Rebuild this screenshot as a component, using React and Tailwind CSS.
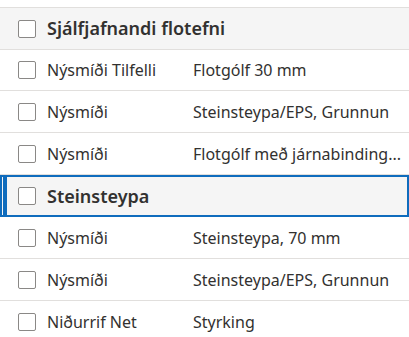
import React from "react";

const font = { fontFamily: '"Noto Sans", "Open Sans", sans-serif' };

function Box() {
  return <div className="w-[18px] h-[18px] rounded-[2px] border-[1.5px] border-[#8a8886] bg-white shrink-0" />;
}

function Row({ a, b, h = "h-[42px]" }) {
  return (
    <div className={`${h} flex items-center border-b border-[#e1dfdd] bg-white`}>
      <div className="w-[47px] pl-[18px] flex items-center shrink-0"><Box /></div>
      <div className="w-[146px] shrink-0 text-[16px] text-[#323130] whitespace-nowrap">{a}</div>
      <div className="shrink-0 text-[16px] text-[#323130] whitespace-nowrap">{b}</div>
    </div>
  );
}

export default function App() {
  return (
    <div className="w-[409px] h-[337px] overflow-hidden bg-white" style={font}>
      <div className="h-[8px] border-b border-[#e1dfdd]" />
      <div className="h-[42px] flex items-center border-b border-[#e1dfdd] bg-[#f5f5f5]">
        <div className="w-[47px] pl-[18px] flex items-center shrink-0"><Box /></div>
        <div className="text-[18px] font-semibold text-[#323130] whitespace-nowrap">Sjálfjafnandi flotefni</div>
      </div>
      <Row a="Nýsmíði Tilfelli" b="Flotgólf 30 mm" h="h-[41px]" />
      <Row a="Nýsmíði" b="Steinsteypa/EPS, Grunnun" />
      <Row a="Nýsmíði" b="Flotgólf með járnabinding..." />
      <div className="h-[42px] flex items-center border-2 border-[#0f6cbd] bg-[#f5f5f5]">
        <div className="w-[4px] h-full ml-[1px] bg-[#0f6cbd] shrink-0" />
        <div className="w-[40px] pl-[11px] flex items-center shrink-0"><Box /></div>
        <div className="text-[18px] font-semibold text-[#323130] whitespace-nowrap">Steinsteypa</div>
      </div>
      <Row a="Nýsmíði" b="Steinsteypa, 70 mm" />
      <Row a="Nýsmíði" b="Steinsteypa/EPS, Grunnun" />
      <Row a="Niðurrif Net" b="Styrking" />
    </div>
  );
}
